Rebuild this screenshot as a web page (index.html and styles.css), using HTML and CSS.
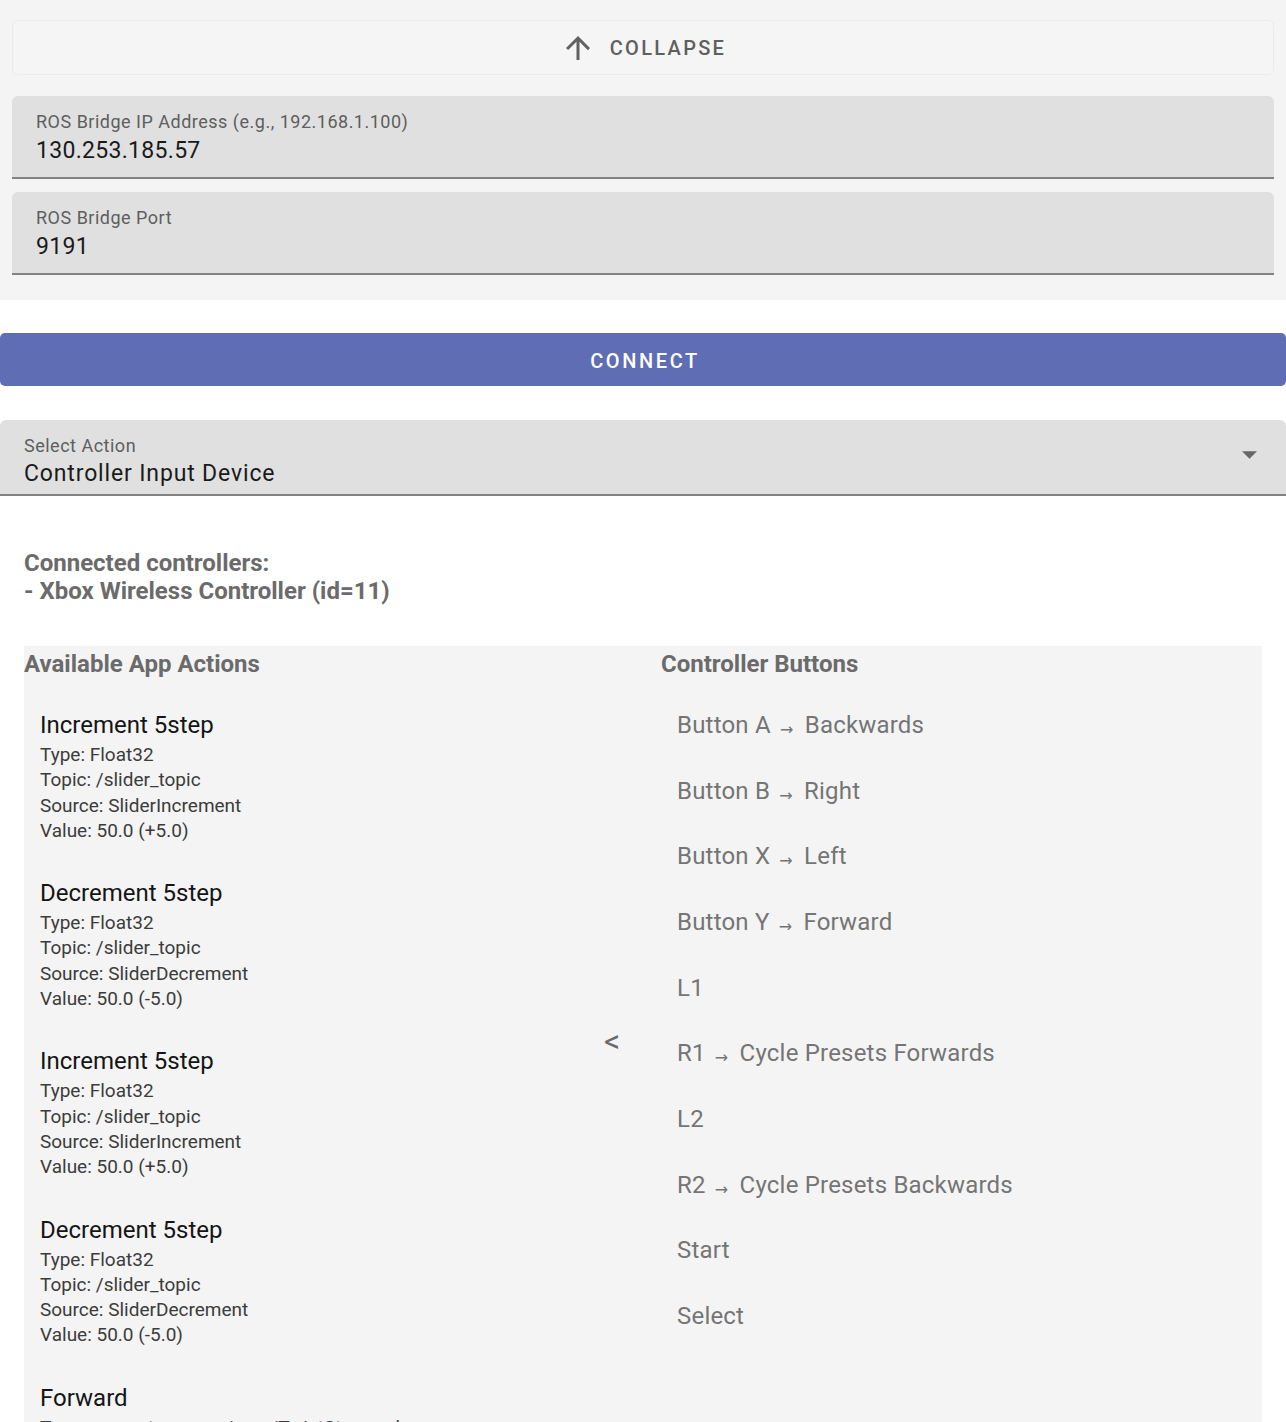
FILE: index.html
```html
<!DOCTYPE html>
<html lang="en">
<head>
<meta charset="utf-8">
<title>ROS Bridge Controller</title>
<link rel="stylesheet" href="styles.css">
</head>
<body>
<div class="top">
  <div class="collapse">
    <svg class="collapse-icon" viewBox="0 0 24 24" width="36" height="36"><path d="M4 12l1.41 1.41L11 7.83V20h2V7.83l5.58 5.59L20 12l-8-8-8 8z" fill="#616161"/></svg>
    <span class="collapse-text">COLLAPSE</span>
  </div>
  <div class="field">
    <div class="field-label">ROS Bridge IP Address (e.g., 192.168.1.100)</div>
    <div class="field-value">130.253.185.57</div>
  </div>
  <div class="field">
    <div class="field-label">ROS Bridge Port</div>
    <div class="field-value">9191</div>
  </div>
</div>

<div class="connect">CONNECT</div>

<div class="select">
  <div class="select-text">
    <div class="select-label">Select Action</div>
    <div class="select-value">Controller Input Device</div>
  </div>
  <svg class="select-arrow" viewBox="7 10 10 5" width="15" height="8"><path d="M7 10l5 5 5-5z" fill="#666"/></svg>
</div>

<div class="connected">
  <div>Connected controllers:</div>
  <div>- Xbox Wireless Controller (id=11)</div>
</div>

<div class="panel">
  <div class="col-left">
    <div class="heading">Available App Actions</div>
    <div class="actions">
      <div class="action">
        <div class="action-title">Increment 5step</div>
        <div class="action-line">Type: Float32</div>
        <div class="action-line">Topic: /slider_topic</div>
        <div class="action-line">Source: SliderIncrement</div>
        <div class="action-line">Value: 50.0 (+5.0)</div>
      </div>
      <div class="action">
        <div class="action-title">Decrement 5step</div>
        <div class="action-line">Type: Float32</div>
        <div class="action-line">Topic: /slider_topic</div>
        <div class="action-line">Source: SliderDecrement</div>
        <div class="action-line">Value: 50.0 (-5.0)</div>
      </div>
      <div class="action">
        <div class="action-title">Increment 5step</div>
        <div class="action-line">Type: Float32</div>
        <div class="action-line">Topic: /slider_topic</div>
        <div class="action-line">Source: SliderIncrement</div>
        <div class="action-line">Value: 50.0 (+5.0)</div>
      </div>
      <div class="action">
        <div class="action-title">Decrement 5step</div>
        <div class="action-line">Type: Float32</div>
        <div class="action-line">Topic: /slider_topic</div>
        <div class="action-line">Source: SliderDecrement</div>
        <div class="action-line">Value: 50.0 (-5.0)</div>
      </div>
      <div class="action">
        <div class="action-title">Forward</div>
        <div class="action-line">Type: geometry_msgs/msg/TwistStamped</div>
        <div class="action-line">Topic: /cmd_vel</div>
        <div class="action-line">Source: Button</div>
        <div class="action-line">Value: linear.x = 0.5</div>
      </div>
    </div>
  </div>
  <div class="col-mid"><span class="chevron">&lt;</span></div>
  <div class="col-right">
    <div class="heading">Controller Buttons</div>
    <div class="buttons">
      <div class="btn-row">Button A <span class="arrow">→</span> Backwards</div>
      <div class="btn-row">Button B <span class="arrow">→</span> Right</div>
      <div class="btn-row">Button X <span class="arrow">→</span> Left</div>
      <div class="btn-row">Button Y <span class="arrow">→</span> Forward</div>
      <div class="btn-row">L1</div>
      <div class="btn-row">R1 <span class="arrow">→</span> Cycle Presets Forwards</div>
      <div class="btn-row">L2</div>
      <div class="btn-row">R2 <span class="arrow">→</span> Cycle Presets Backwards</div>
      <div class="btn-row">Start</div>
      <div class="btn-row">Select</div>
    </div>
  </div>
</div>
</body>
</html>
```

FILE: styles.css
```css
* { box-sizing: border-box; }
html, body { margin: 0; padding: 0; background: #ffffff; }
body {
  font-family: Roboto, "Noto Sans", "Liberation Sans", sans-serif;
  color: #1c1c1c;
  width: 1286px;
  overflow: hidden;
}

.top {
  background: #f4f4f4;
  padding: 20px 12px 25px;
  display: flex;
  flex-direction: column;
}

.collapse {
  height: 55px;
  border: 1px solid #ececec;
  border-radius: 6px;
  background: #f5f5f5;
  display: flex;
  align-items: center;
  justify-content: center;
  gap: 14px;
  padding-top: 1px;
  margin-bottom: 21px;
}
.collapse-icon { display: block; }
.collapse-text {
  font-size: 20px;
  font-weight: 500;
  letter-spacing: 2.3px;
  color: #5f5f5f;
}

.field {
  height: 83px;
  background: #e0e0e0;
  border-radius: 6px 6px 0 0;
  border-bottom: 2px solid #828282;
  padding: 15px 24px 0;
}
.field + .field { margin-top: 13px; }
.field-label {
  font-size: 18px;
  line-height: 22px;
  color: #5e5e5e;
  letter-spacing: 0.5px;
}
.field-value {
  margin-top: 3px;
  font-size: 23px;
  line-height: 30px;
  color: #1a1a1a;
  letter-spacing: 0.3px;
}

.connect {
  margin-top: 33px;
  height: 53px;
  background: #5f6db4;
  border-radius: 5px;
  color: #ffffff;
  font-size: 20px;
  font-weight: 500;
  letter-spacing: 2.6px;
  display: flex;
  align-items: center;
  justify-content: center;
  padding: 2px 0 0 4px;
}

.select {
  margin-top: 34px;
  height: 76px;
  background: #e0e0e0;
  border-radius: 6px 6px 0 0;
  border-bottom: 2px solid #828282;
  display: flex;
  align-items: center;
  padding: 0 29px 0 24px;
}
.select-text { flex: 1; padding-top: 8px; }
.select-label {
  font-size: 18px;
  line-height: 24px;
  color: #5e5e5e;
  letter-spacing: 0.5px;
}
.select-value {
  margin-top: 1px;
  font-size: 23px;
  line-height: 30px;
  color: #1a1a1a;
  letter-spacing: 0.85px;
}
.select-arrow { display: block; margin-bottom: 4px; }

.connected {
  padding: 53px 24px 0;
  font-size: 24px;
  font-weight: 700;
  line-height: 28px;
  color: #6b6b6b;
}

.panel {
  margin: 41px 24px 0;
  background: #f4f4f4;
  display: flex;
  padding-top: 3px;
}
.heading {
  font-size: 24px;
  font-weight: 700;
  line-height: 30px;
  color: #6b6b6b;
}
.col-left { width: 566px; }
.actions { padding: 31px 0 0 16px; }
.action { margin-bottom: 35px; }
.action-title {
  font-size: 24px;
  line-height: 30px;
  margin-bottom: 2px;
  color: #151515;
}
.action-line {
  font-size: 19px;
  line-height: 25.3px;
  color: #3c3c3c;
}

.col-mid {
  width: 71px;
  padding: 377px 0 0 14px;
}
.chevron {
  font-size: 32px;
  color: #6b6b6b;
  line-height: 30px;
}

.col-right { flex: 1; }
.buttons { padding: 30px 0 0 16px; }
.btn-row {
  height: 65.67px;
  font-size: 24px;
  line-height: 32px;
  color: #757575;
  letter-spacing: 0.2px;
}
.arrow {
  font-family: "DejaVu Sans", sans-serif;
  font-size: 16px;
  margin: 0 5px 0 3px;
  position: relative;
  top: 2px;
}
```
